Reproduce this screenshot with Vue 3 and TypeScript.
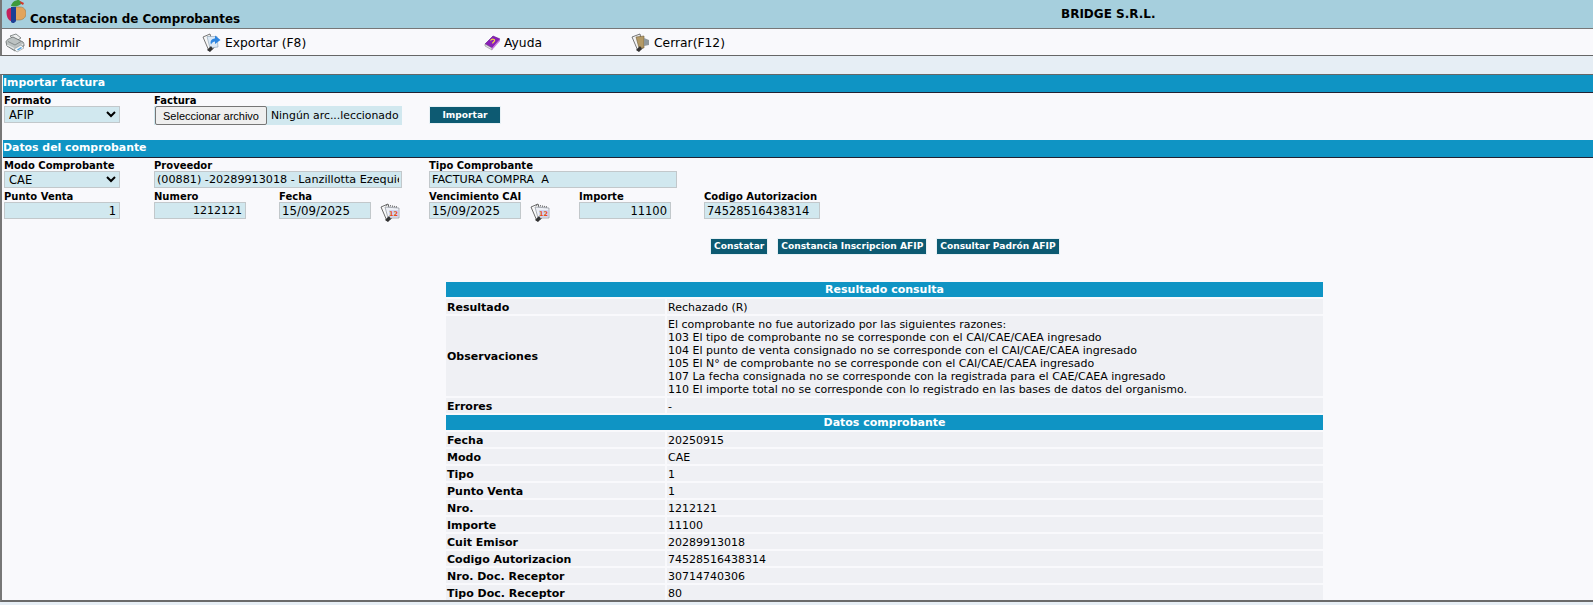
<script setup lang="ts">
const infoRows: [string, string][] = [
  ['Fecha', '20250915'],
  ['Modo', 'CAE'],
  ['Tipo', '1'],
  ['Punto Venta', '1'],
  ['Nro.', '1212121'],
  ['Importe', '11100'],
  ['Cuit Emisor', '20289913018'],
  ['Codigo Autorizacion', '74528516438314'],
  ['Nro. Doc. Receptor', '30714740306'],
  ['Tipo Doc. Receptor', '80'],
]
const obs: string[] = [
  'El comprobante no fue autorizado por las siguientes razones:',
  '103 El tipo de comprobante no se corresponde con el CAI/CAE/CAEA ingresado',
  '104 El punto de venta consignado no se corresponde con el CAI/CAE/CAEA ingresado',
  '105 El N° de comprobante no se corresponde con el CAI/CAE/CAEA ingresado',
  '107 La fecha consignada no se corresponde con la registrada para el CAE/CAEA ingresado',
  '110 El importe total no se corresponde con lo registrado en las bases de datos del organismo.',
]
</script>

<template>
  <div class="page">
    <header class="top">
      <svg class="logo" viewBox="0 0 22 24" width="22" height="24">
        <path d="M7 6 C8 2 11 0 15 0 L18 3 C16 6 11 7 7 6Z" fill="#3f9a3c" />
        <path d="M16 1 L20 3 L19 5 L16.5 3.5Z" fill="#d2382c" />
        <path d="M11 7 H16 C20 7 22 10 22 13.5 C22 17.5 19 20 15 20 H11Z" fill="#e2a45c" stroke="#9a7a4a" stroke-width=".6" />
        <path d="M7 7 H12 V21 C10.5 23.5 8 23.5 7 22Z" fill="#1d3f95" />
        <path d="M2.5 12 C2.5 9.5 4.5 8 7 8 V21 C4.5 20.5 2.5 17 2.5 12Z" fill="#c4215c" />
      </svg>
      <h1 class="title">Constatacion de Comprobantes</h1>
      <span class="company">BRIDGE S.R.L.</span>
    </header>

    <nav class="toolbar">
      <a class="tool tool-print">
        <svg viewBox="0 0 20 20" width="20" height="20">
          <path d="M5 3 L11 1 L16 5 L11 8Z" fill="#eef0f0" stroke="#6c7272" stroke-width=".8" />
          <path d="M1 9 C1 7 5 5 8 4 L18 9 C19 10 19 12 19 13 L10 18 L2 13Z" fill="#bcc2c2" stroke="#5f6666" stroke-width=".8" />
          <path d="M2 12 L10 16 L18.500 11" fill="none" stroke="#eef0f0" stroke-width="1" />
          <path d="M3 8.500 L10 12 L16 8.500" fill="none" stroke="#858c8c" stroke-width="1" />
          <path d="M9 16 L16 12 L19 15 L12 19Z" fill="#f2f5f6" stroke="#7a8080" stroke-width=".5" />
          <path d="M12 16.500 L16 14 L17 15 L13 17.500Z" fill="#4fa2e0" />
        </svg>
        Imprimir
      </a>
      <a class="tool tool-export">
        <svg viewBox="0 0 20 20" width="20" height="20">
          <path d="M1 4 L8 1 L12 15 L7 18Z" fill="#f6f6f6" stroke="#555" stroke-width=".8" />
          <path d="M5 3.500 H15 L16 14 L8 15Z" fill="#dce9f6" stroke="#8aa0b0" stroke-width=".6" />
          <path d="M5 17 L9 13 L11 16 L8 19Z" fill="#333" />
          <path d="M9 11.500 C7.500 7.500 10.500 5.500 13 5.500 V2.500 L18.500 7 L13 11 V8.500 C11.500 8.500 10 9.500 9 11.500Z" fill="#2f86e0" />
        </svg>
        Exportar (F8)
      </a>
      <a class="tool tool-help">
        <svg viewBox="0 0 17 17" width="17" height="17">
          <path d="M1 10 L9 2 L16 5 L8 14Z" fill="#8a1fb8" stroke="#5c1184" stroke-width=".6" />
          <path d="M1 10 L8 14 L8 16 L1 12Z" fill="#e6dcea" stroke="#777" stroke-width=".5" />
          <path d="M8 14 L16 5 V7 L8 16Z" fill="#c76fe0" />
          <path d="M6.500 6.500 C8 4.500 11 5 10.500 6.800 C10 8 8.800 8 8.500 9.500" fill="none" stroke="#f5e23c" stroke-width="1.2" />
        </svg>
        Ayuda
      </a>
      <a class="tool tool-close">
        <svg viewBox="0 0 20 20" width="20" height="20">
          <path d="M1 4 L9 1 L12 15 L7 18Z" fill="#f3f3f3" stroke="#555" stroke-width=".8" />
          <path d="M5 4 L13 3 V15 L8 15Z" fill="#b49a66" stroke="#6e5c3a" stroke-width=".6" />
          <path d="M13 5 L18 7 V12 L13 13Z" fill="#8f989c" />
          <path d="M5 17 L9 13 L11 16 L8 19Z" fill="#333" />
        </svg>
        Cerrar(F12)
      </a>
    </nav>

    <main class="content">
      <h2 class="section">Importar factura</h2>
      <div class="fields fields-import">
        <div class="field">
          <label>Formato</label>
          <select class="control w-116"><option>AFIP</option></select>
        </div>
        <div class="field col-2">
          <label>Factura</label>
          <div class="file">
            <button type="button" class="file-btn">Seleccionar archivo</button>
            <span class="file-name">Ningún arc...leccionado</span>
          </div>
        </div>
        <button type="button" class="action importar">Importar</button>
      </div>

      <h2 class="section">Datos del comprobante</h2>
      <div class="fields">
        <div class="field">
          <label>Modo Comprobante</label>
          <select class="control w-116"><option>CAE</option></select>
        </div>
        <div class="field col-2">
          <label>Proveedor</label>
          <input class="control w-248 narrow" value="(00881) -20289913018 - Lanzillotta Ezequiel" />
        </div>
        <div class="field col-3">
          <label>Tipo Comprobante</label>
          <input class="control w-248 narrow" value="FACTURA COMPRA  A" />
        </div>
      </div>
      <div class="fields second">
        <div class="field">
          <label>Punto Venta</label>
          <input class="control w-116 right" value="1" />
        </div>
        <div class="field">
          <label>Numero</label>
          <input class="control w-92 right number" value="1212121" />
        </div>
        <div class="field">
          <label>Fecha</label>
          <div class="with-cal">
            <input class="control w-92 date" value="15/09/2025" />
            <svg class="cal" viewBox="0 0 20 20" width="20" height="20">
              <path d="M1 4 L8 1 L12 15 L7 18Z" fill="#f8f8f8" stroke="#444" stroke-width=".8" />
              <path d="M5 4 L19 5 V15 H8Z" fill="#eef0f6" stroke="#8a8f98" stroke-width=".7" />
              <path d="M6 2 L17 4" stroke="#666" stroke-width="1.4" stroke-dasharray="1 1" />
              <path d="M9 7 H18 V14 H9Z" fill="#cfd6f2" />
              <text x="13.500" y="13" class="cal-num">12</text>
              <path d="M5 17 L9 13 L11 16 L8 19Z" fill="#333" />
            </svg>
          </div>
        </div>
        <div class="field">
          <label>Vencimiento CAI</label>
          <div class="with-cal">
            <input class="control w-92 date" value="15/09/2025" />
            <svg class="cal" viewBox="0 0 20 20" width="20" height="20">
              <path d="M1 4 L8 1 L12 15 L7 18Z" fill="#f8f8f8" stroke="#444" stroke-width=".8" />
              <path d="M5 4 L19 5 V15 H8Z" fill="#eef0f6" stroke="#8a8f98" stroke-width=".7" />
              <path d="M6 2 L17 4" stroke="#666" stroke-width="1.4" stroke-dasharray="1 1" />
              <path d="M9 7 H18 V14 H9Z" fill="#cfd6f2" />
              <text x="13.500" y="13" class="cal-num">12</text>
              <path d="M5 17 L9 13 L11 16 L8 19Z" fill="#333" />
            </svg>
          </div>
        </div>
        <div class="field">
          <label>Importe</label>
          <input class="control w-92 right" value="11100" />
        </div>
        <div class="field">
          <label>Codigo Autorizacion</label>
          <input class="control w-116" value="74528516438314" />
        </div>
      </div>

      <div class="actions">
        <button type="button" class="action">Constatar</button>
        <button type="button" class="action">Constancia Inscripcion AFIP</button>
        <button type="button" class="action">Consultar Padrón AFIP</button>
      </div>

      <div class="result">
        <div class="band">Resultado consulta</div>
        <div class="key">Resultado</div>
        <div class="val">Rechazado (R)</div>
        <div class="key">Observaciones</div>
        <div class="val obs">
          <div v-for="line in obs" :key="line">{{ line }}</div>
        </div>
        <div class="key">Errores</div>
        <div class="val">-</div>
        <div class="band">Datos comprobante</div>
        <template v-for="row in infoRows" :key="row[0]">
          <div class="key">{{ row[0] }}</div>
          <div class="val">{{ row[1] }}</div>
        </template>
      </div>
    </main>
  </div>
</template>

<style scoped>
.page {
  width: 1593px;
  height: 605px;
  overflow: hidden;
  box-sizing: border-box;
  background: #e6eef5;
  font-family: "DejaVu Sans", Verdana, sans-serif;
  font-size: 11px;
  color: #000;
}
.top {
  height: 28px;
  border-left: 2px solid #777;
  background: #a6cfdd;
  display: flex;
  position: relative;
  border-bottom: 1px solid #777;
}
.logo { margin: 0 0 0 2px; flex: none; }
.title {
  margin: 11px 0 0 4px;
  font-size: 11.9px;
  line-height: 16px;
  font-weight: bold;
}
.company {
  position: absolute;
  left: 1059px;
  top: 6px;
  font-size: 12px;
  line-height: 16px;
  font-weight: bold;
}
.toolbar {
  height: 25px;
  padding-top: 1px;
  background: #f9f9fc;
  border-left: 2px solid #777;
  border-bottom: 1px solid #666;
  display: flex;
  align-items: center;
  padding-left: 3px;
  font-size: 12.3px;
}
.tool { display: flex; align-items: center; gap: 3px; flex: none; }
.tool-print { width: 197px; }
.tool-export { width: 282px; }
.tool-help { width: 147px; }
.content {
  margin-top: 18px;
  height: 528px;
  box-sizing: border-box;
  background: #f9f9fc;
  border-left: 2px solid #777;
  border-top: 1px solid #666;
  border-bottom: 2px solid #6a6a6a;
}
.section {
  margin: 0 0 0 1px;
  height: 17px;
  background: #0f94c4;
  border-bottom: 1px solid #223;
  color: #fff;
  font-size: 10.9px;
  line-height: 16px;
  font-weight: bold;
}
.fields {
  display: grid;
  grid-template-columns: 150px 125px 150px 150px 125px 1fr;
  padding-left: 2px;
}
.fields-import { align-items: start; height: 47px; }
.field { display: flex; flex-direction: column; }
.col-2 { grid-column: 2 / span 2; }
.col-3 { grid-column: 4 / span 3; }
.field label {
  height: 13px;
  line-height: 15px;
  font-size: 10px;
  font-weight: bold;
  white-space: nowrap;
}
.second { margin-top: 1px; }
.control {
  box-sizing: border-box;
  height: 17px;
  background: #d1e8ef;
  border: 1px solid #c2c8cb;
  border-radius: 0;
  font-family: inherit;
  font-size: 11.5px;
  color: #000;
  padding: 0 2px;
  margin: 0;
  outline: none;
}
select.control { padding: 0; }
.right { text-align: right; padding-right: 3px; }
.narrow { font-size: 11.2px; }
.date { font-size: 11.8px; }
.number { font-size: 11px; }
.w-116 { width: 116px; }
.w-92 { width: 92px; }
.w-248 { width: 248px; }
.with-cal { display: flex; align-items: flex-start; }
.cal { flex: none; margin: 1px 0 0 9px; }
.cal-num { font-size: 6.5px; font-weight: bold; fill: #e8501c; text-anchor: middle; font-family: "DejaVu Sans", sans-serif; }
.file {
  width: 248px;
  height: 19px;
  background: #d1e8ef;
  display: flex;
  align-items: center;
}
.file-btn {
  box-sizing: border-box;
  width: 112px;
  height: 19px;
  margin: 0 0 0 1px;
  padding: 0;
  background: #efefef;
  border: 1px solid #767676;
  border-radius: 2px;
  font-family: "Liberation Sans", Arial, sans-serif;
  font-size: 11px;
  color: #000;
}
.file-name { margin-left: 4px; white-space: nowrap; font-size: 10.85px; }
.action {
  box-sizing: border-box;
  height: 17px;
  padding: 0 3px;
  background: #0d5a72;
  border: 1px solid #e8f1f5;
  color: #fff;
  font-family: inherit;
  font-size: 9.1px;
  font-weight: bold;
  line-height: 15px;
  white-space: nowrap;
}
.importar {
  grid-column: 4;
  width: 72px;
  height: 18px;
  margin: 13px 0 0 0;
}
.actions {
  display: flex;
  gap: 9px;
  margin: 15px 0 0 708px;
}
.result {
  display: grid;
  grid-template-columns: 219px 656px;
  gap: 2px;
  margin: 27px 0 0 444px;
  width: 877px;
  line-height: 13px;
}
.band {
  grid-column: 1 / -1;
  height: 15px;
  line-height: 16px;
  background: #0f94c4;
  color: #fff;
  text-align: center;
  font-weight: bold;
  font-size: 11px;
}
.key, .val {
  min-height: 15px;
  box-sizing: border-box;
  background: #eff0f4;
  padding-left: 1px;
  padding-top: 1px;
  display: flex;
  align-items: center;
}
.key { font-weight: bold; font-size: 11px; }
.obs { display: block; padding-top: 2px; }
</style>

<style>
html, body { margin: 0; padding: 0; background: #e6eef5; overflow: hidden; }
</style>
